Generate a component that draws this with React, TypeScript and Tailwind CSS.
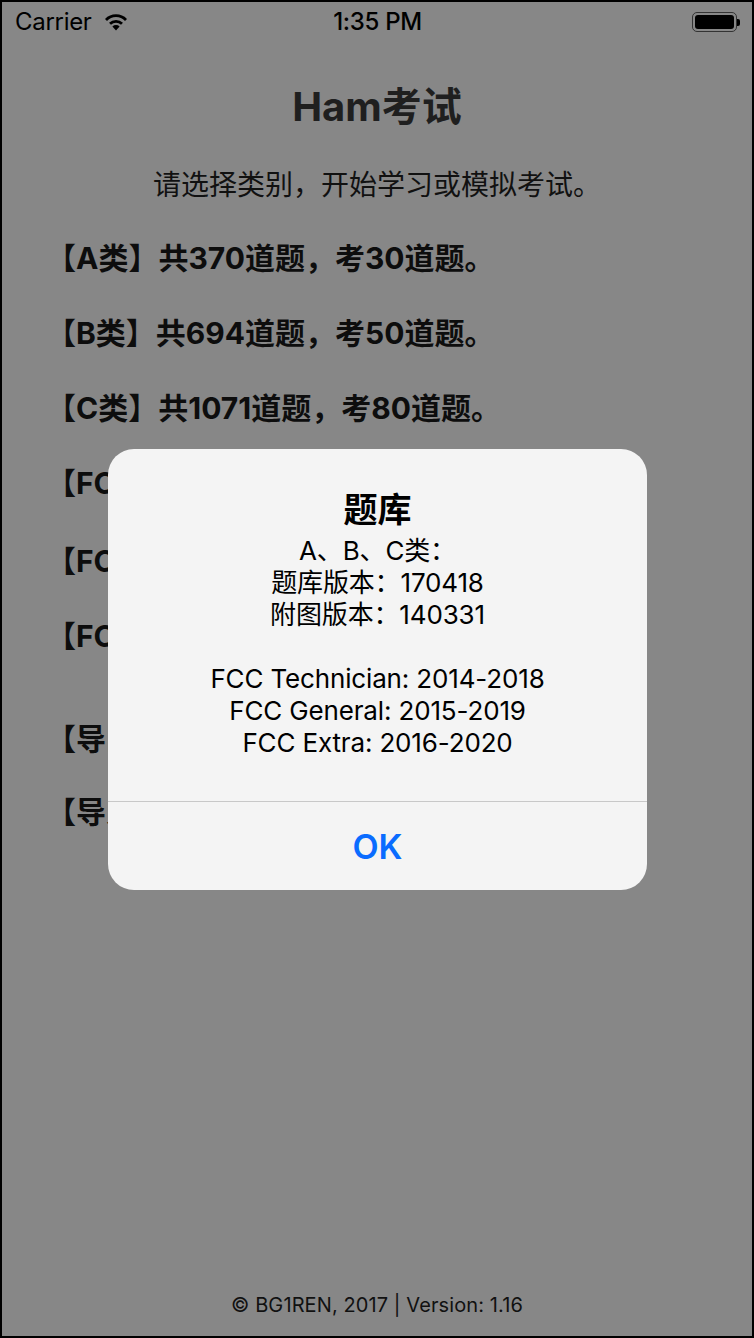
import React from 'react';

const font = { fontFamily: 'Inter, "Noto Sans CJK SC", sans-serif' };

const rows = [
  { text: '【A类】共370道题，考30道题。', mt: 'mt-[35px]' },
  { text: '【B类】共694道题，考50道题。', mt: 'mt-[35px]' },
  { text: '【C类】共1071道题，考80道题。', mt: 'mt-[35px]' },
  { text: '【FCC Technician】共426道题。', mt: 'mt-[35px]' },
  { text: '【FCC General】共456道题。', mt: 'mt-[38px]' },
  { text: '【FCC Extra】共712道题。', mt: 'mt-[35px]' },
  { text: '【导出错题和收藏】', mt: 'mt-[63px]' },
  { text: '【导入错题和收藏】', mt: 'mt-[33px]' },
];

const Wifi = () => (
  <svg width="24" height="18" viewBox="0 0 24 18" className="ml-[12px]">
    <path d="M12 17.5 L8.4 13.4 A5.2 5.2 0 0 1 15.6 13.4 Z" fill="#000" />
    <path d="M6 10.8 A8.6 8.6 0 0 1 18 10.8" stroke="#000" strokeWidth="2.8" fill="none" />
    <path d="M2 6.9 A14 14 0 0 1 22 6.9" stroke="#000" strokeWidth="2.8" fill="none" />
  </svg>
);

const Battery = () => (
  <div className="flex items-center">
    <div className="w-[45px] h-[20px] rounded-[5px] border border-[#333] p-[2px]">
      <div className="w-full h-full rounded-[3px] bg-black" />
    </div>
    <div className="w-[3px] h-[7px] rounded-r-[2px] bg-black" />
  </div>
);

export default function App() {
  return (
    <div className="relative w-[754px] h-[1338px] border-2 border-black bg-[#878787] flex flex-col overflow-hidden" style={font}>
      {/* status bar */}
      <div className="h-[40px] flex items-center justify-between pl-[13px] pr-[12px] text-black">
        <div className="flex items-center w-[200px] text-[24px] tracking-[-0.3px]">
          <span>Carrier</span>
          <Wifi />
        </div>
        <div className="text-[24px] font-medium tracking-[-0.3px]">1:35 PM</div>
        <div className="w-[200px] flex justify-end">
          <Battery />
        </div>
      </div>

      <h1 className="mt-[41px] text-center text-[40px] leading-[48px] font-bold text-[#1f1f1f]">Ham考试</h1>
      <p className="mt-[36px] text-center text-[28px] leading-[36px] text-[#111]">请选择类别，开始学习或模拟考试。</p>

      <div className="flex flex-col pl-[44px]">
        {rows.map((r) => (
          <div key={r.text} className={`${r.mt} text-[30px] leading-[40px] font-bold text-[#0d0d0d] whitespace-nowrap`}>
            {r.text}
          </div>
        ))}
      </div>

      <div className="mt-auto mb-[19px] text-center text-[20px] leading-[24px] text-[#111] tracking-[0.1px]">
        © BG1REN, 2017 | Version: 1.16
      </div>

      {/* alert */}
      <div className="absolute left-[106px] top-[447px] w-[539px] rounded-[26px] bg-[#f4f4f4] overflow-hidden flex flex-col">
        <div className="pt-[41px] pb-[42px] px-[30px] flex flex-col items-center text-black">
          <div className="text-[34px] leading-[40px] font-bold">题库</div>
          <div className="mt-[5px] text-[26px] leading-[32px] text-center tracking-[-0.15px]">
            <div>A、B、C类：</div>
            <div>题库版本：170418</div>
            <div>附图版本：140331</div>
            <div className="h-[32px]" />
            <div>FCC Technician: 2014-2018</div>
            <div>FCC General: 2015-2019</div>
            <div>FCC Extra: 2016-2020</div>
          </div>
        </div>
        <div className="h-px bg-[#c8c8c8]" />
        <div className="h-[88px] flex items-center justify-center text-[34px] font-semibold text-[#0a6cff]">OK</div>
      </div>
    </div>
  );
}
